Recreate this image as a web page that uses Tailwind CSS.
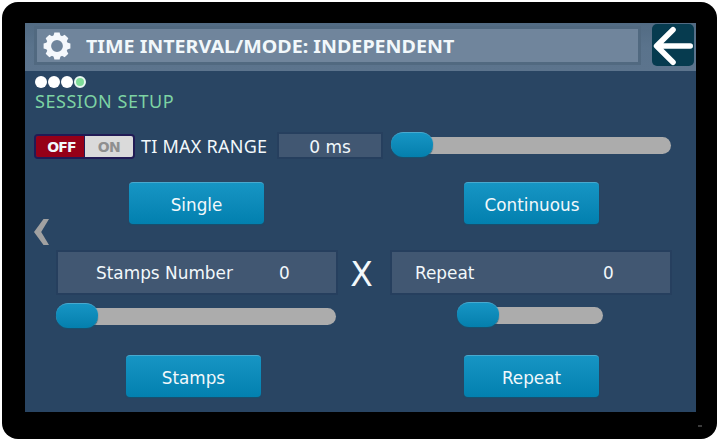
<!DOCTYPE html>
<html lang="en">
<head>
<meta charset="utf-8">
<title>Session Setup</title>
<script src="https://cdn.jsdelivr.net/npm/@tailwindcss/browser@4"></script>
</head>
<body class="w-[721px] h-[441px] overflow-hidden bg-white pl-[2px] pt-[2px] font-['Noto_Sans','DejaVu_Sans',sans-serif] text-[#f2f8fb]">
<div class="relative w-[715px] h-[437px] rounded-[16px] bg-black pl-[23px] pt-[21px]">
  <main class="w-[671px] h-[389px] bg-[#294563] overflow-hidden">
    <header class="flex h-[48px] bg-linear-to-b from-[#526b83] via-[#5a738c] to-[#5c748d] pl-[9px] pt-px">
      <div class="mt-[2px] flex h-[39px] w-[607px] items-center border-[3px] border-[#516980] bg-[#70859c] pl-[6px]">
        <svg class="size-[28px] shrink-0" viewBox="-14 -14 28 28" fill="none">
          <circle r="8.4" stroke="#f5f8fc" stroke-width="5"/>
          <g fill="#f5f8fc">
            <path id="tooth" d="M-3.6 -10 L-2.6 -13.4 H2.6 L3.6 -10Z"/>
            <use href="#tooth" transform="rotate(45)"/><use href="#tooth" transform="rotate(90)"/><use href="#tooth" transform="rotate(135)"/><use href="#tooth" transform="rotate(180)"/><use href="#tooth" transform="rotate(225)"/><use href="#tooth" transform="rotate(270)"/><use href="#tooth" transform="rotate(315)"/>
          </g>
        </svg>
        <h1 class="ml-[15px] origin-left scale-x-[1.092] whitespace-nowrap text-[18px] leading-[24px] font-bold">TIME INTERVAL/MODE: INDEPENDENT</h1>
      </div>
      <button class="ml-[11px] size-[42px] rounded-[5px] bg-[#063b4f]">
        <svg class="size-[42px]" viewBox="0 0 42 42" fill="none" stroke="#fff" stroke-width="5.6" stroke-linecap="round" stroke-linejoin="round"><path d="M38.2 22H5M21 5.8L4.6 22L21 38.2"/></svg>
      </button>
    </header>

    <div class="flex gap-[1.5px] pl-[10px] pt-[5px]">
      <i class="size-[11.5px] rounded-full bg-white"></i>
      <i class="size-[11.5px] rounded-full bg-white"></i>
      <i class="size-[11.5px] rounded-full bg-white"></i>
      <i class="size-[11.5px] rounded-full border-2 border-[#e8f8f2] bg-[#7edc99]"></i>
    </div>
    <h2 class="mt-[1.5px] pl-[10px] text-[18px] leading-[24px] tracking-[0.55px] text-[#7dd3a3]">SESSION SETUP</h2>

    <section class="mt-[19px] flex h-[28px] pl-[9px]">
      <div class="mt-[2px] flex h-[25px] w-[101px] overflow-hidden rounded-[4px] border-2 border-[#211b55] font-['DejaVu_Sans',sans-serif] text-[14px] leading-[23px] font-bold">
        <span class="w-[49px] border-r border-[#211b55] bg-[#960018] pl-[3px] text-center tracking-[-0.8px]">OFF</span>
        <span class="flex-1 bg-[#dadada] text-center tracking-[-0.6px] text-[#8f8f8f]">ON</span>
      </div>
      <span class="ml-[6px] w-[136px] whitespace-nowrap text-[18px] leading-[28px] tracking-[0.25px]">TI MAX RANGE</span>
      <div class="h-[27px] w-[106px] border-2 border-[#263f5e] bg-[#415772] text-center text-[17px] leading-[26px] font-['DejaVu_Sans',sans-serif]">0 ms</div>
      <div class="relative ml-[8px] mt-[5px] h-[17px] w-[280px] rounded-full bg-[#acacac]">
        <b class="absolute left-0 -top-[5px] h-[25px] w-[42px] rounded-[12px] border-t border-[#48a9cf] bg-linear-to-b from-[#1695c4] to-[#047fad] shadow-[0_1px_1px_#17516f]"></b>
      </div>
    </section>

    <section class="mt-[22px] flex pl-[104px] font-['DejaVu_Sans',sans-serif] text-[16.8px]">
      <button class="h-[42px] w-[135px] rounded-[4px] border-t border-[#48a9cf] bg-linear-to-b from-[#1695c4] to-[#0280af] pt-[4px] shadow-[0_1px_1px_#16506f]">Single</button>
      <button class="ml-[200px] h-[42px] w-[135px] rounded-[4px] border-t border-[#48a9cf] bg-linear-to-b from-[#1695c4] to-[#0280af] pt-[4px] pl-px shadow-[0_1px_1px_#16506f]">Continuous</button>
    </section>
    <svg class="-mt-[5px] ml-[9px] block h-[26px] w-[15px]" viewBox="0 0 15 26" fill="#a1a1a1"><path d="M9.5 0H15L7.2 13L15 26H9.5L0 13Z"/></svg>

    <section class="mt-[5px] flex h-[45px] pl-[31px] font-['DejaVu_Sans',sans-serif] text-[16.9px] leading-[43px]">
      <div class="flex w-[282px] border-2 border-[#263f5e] bg-[#415772] pl-[38px]"><span class="w-[183px]">Stamps Number</span><span>0</span></div>
      <span class="w-[52px] pr-[5px] text-center text-[33px] leading-[49px]">X</span>
      <div class="flex w-[282px] border-2 border-[#263f5e] bg-[#415772] pl-[23px]"><span class="w-[188px]">Repeat</span><span>0</span></div>
    </section>

    <section class="mt-[12px] flex pl-[31px]">
      <div class="relative mt-px h-[17px] w-[280px] rounded-full bg-[#acacac]">
        <b class="absolute left-0 -top-[5px] h-[25px] w-[42px] rounded-[12px] border-t border-[#48a9cf] bg-linear-to-b from-[#1695c4] to-[#047fad] shadow-[0_1px_1px_#17516f]"></b>
      </div>
      <div class="relative ml-[122px] h-[17px] w-[145px] rounded-full bg-[#acacac]">
        <b class="absolute -left-px -top-[5px] h-[25px] w-[42px] rounded-[12px] border-t border-[#48a9cf] bg-linear-to-b from-[#1695c4] to-[#047fad] shadow-[0_1px_1px_#17516f]"></b>
      </div>
    </section>

    <section class="mt-[30px] flex pl-[101px] font-['DejaVu_Sans',sans-serif] text-[16.8px]">
      <button class="h-[42px] w-[135px] rounded-[4px] border-t border-[#48a9cf] bg-linear-to-b from-[#1695c4] to-[#0280af] pt-[4px] shadow-[0_1px_1px_#16506f]">Stamps</button>
      <button class="ml-[203px] h-[42px] w-[135px] rounded-[4px] border-t border-[#48a9cf] bg-linear-to-b from-[#1695c4] to-[#0280af] pt-[4px] shadow-[0_1px_1px_#16506f]">Repeat</button>
    </section>
  </main>
  <i class="absolute bottom-[12px] right-[15px] h-[2px] w-[4px] bg-[#3b3b3b]"></i>
</div>
</body>
</html>
